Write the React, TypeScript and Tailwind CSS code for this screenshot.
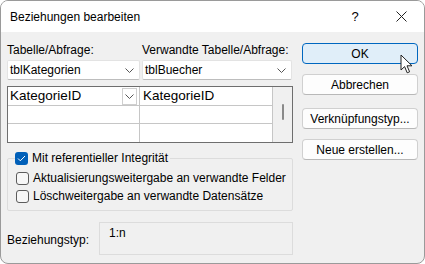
import React from 'react';

const font = { fontFamily: '"Liberation Sans", Arial, sans-serif' };

function Chevron({ className = '' }: { className?: string }) {
  return (
    <svg width="9" height="5" viewBox="0 0 9 5" className={className}>
      <path d="M0.5 0.5 L4.5 4.5 L8.5 0.5" fill="none" stroke="#555" strokeWidth="1" />
    </svg>
  );
}

function Combo({ value, width }: { value: string; width: string }) {
  return (
    <div
      className={`${width} h-[20px] bg-white border border-[#e3e3e3] border-b-[#bdbdbd] rounded-[2px] flex items-center pl-[2px] pr-[5px]`}
    >
      <span className="text-[12px] leading-[16px] text-black">{value}</span>
      <Chevron className="ml-auto" />
    </div>
  );
}

function CheckBox({ checked }: { checked?: boolean }) {
  if (checked) {
    return (
      <span className="w-[13px] h-[13px] rounded-[3px] bg-[#005fb8] flex items-center justify-center shrink-0">
        <svg width="9" height="7" viewBox="0 0 9 7">
          <path d="M1 3.5 L3.3 5.8 L8 1" fill="none" stroke="white" strokeWidth="1" />
        </svg>
      </span>
    );
  }
  return <span className="w-[13px] h-[13px] rounded-[3px] border border-[#5c5c5c] bg-[#f7f7f7] shrink-0" />;
}

function Button({ label, primary, className = '' }: { label: string; primary?: boolean; className?: string }) {
  return (
    <div
      className={`h-[21px] w-full rounded-[4px] flex items-center justify-center text-[12px] text-black ${
        primary ? 'bg-[#e0eef9] border border-[#0067c0]' : 'bg-[#fdfdfd] border border-[#d0d0d0] border-b-[#b8b8b8]'
      } ${className}`}
    >
      {label}
    </div>
  );
}

export default function App() {
  return (
    <div
      className="relative w-[425px] h-[264px] bg-[#f0f0f0] border border-[#9a9a9a] rounded-[8px] overflow-hidden flex flex-col text-black"
      style={font}
    >
      {/* title bar */}
      <div className="h-[31px] bg-white flex items-center shrink-0">
        <span className="pl-[9px] text-[12px]">Beziehungen bearbeiten</span>
        <div className="ml-auto flex h-full">
          <div className="w-[46px] h-full flex items-center justify-center text-[13px]">?</div>
          <div className="w-[46px] h-full flex items-center justify-center">
            <svg width="11" height="11" viewBox="0 0 11 11">
              <path d="M0.5 0.5 L10.5 10.5 M10.5 0.5 L0.5 10.5" stroke="#222" strokeWidth="1" />
            </svg>
          </div>
        </div>
      </div>

      <div className="flex flex-1">
        {/* left column */}
        <div className="w-[292px] pl-[6px] flex flex-col">
          <div className="mt-[10px] h-[16px] flex text-[12px] leading-[16px]">
            <span className="w-[135px]">Tabelle/Abfrage:</span>
            <span>Verwandte Tabelle/Abfrage:</span>
          </div>
          <div className="mt-[2px] flex">
            <Combo value="tblKategorien" width="w-[133px]" />
            <div className="w-[2px]" />
            <Combo value="tblBuecher" width="w-[150px]" />
          </div>

          {/* field grid */}
          <div className="mt-[6px] w-[286px] h-[57px] border border-[#6e6e6e] bg-white flex">
            <div className="w-[132px] flex flex-col border-r border-[#c6c6c6]">
              <div className="h-[19px] border-b border-[#c6c6c6] flex items-center pl-[2px] pr-[2px]">
                <span className="text-[13.5px] leading-[16px]">KategorieID</span>
                <div className="ml-auto w-[15px] h-[17px] border border-[#cfcfcf] flex items-center justify-center">
                  <Chevron />
                </div>
              </div>
              <div className="h-[18px] border-b border-[#c6c6c6]" />
              <div className="flex-1" />
            </div>
            <div className="w-[133px] flex flex-col border-r border-[#c6c6c6]">
              <div className="h-[19px] border-b border-[#c6c6c6] flex items-center pl-[3px]">
                <span className="text-[13.5px] leading-[16px]">KategorieID</span>
              </div>
              <div className="h-[18px] border-b border-[#c6c6c6]" />
              <div className="flex-1" />
            </div>
            <div className="flex-1 bg-[#f0f0f0] flex justify-center pt-[17px]">
              <div className="w-[2px] h-[16px] bg-[#8a8a8a] rounded-full" />
            </div>
          </div>

          {/* referential integrity */}
          <fieldset className="mt-[7px] w-[286px] border border-[#dcdcdc] rounded-[2px] pb-[5px]">
            <legend className="ml-[7px] pr-[2px] h-[16px] flex items-center gap-[4px] text-[12px] leading-[16px]">
              <CheckBox checked />
              <span>Mit referentieller Integrität</span>
            </legend>
            <div className="pt-[3px] pl-[8px] flex flex-col text-[12px] leading-[16px]">
              <div className="h-[18px] flex items-center gap-[4px]">
                <CheckBox />
                <span>Aktualisierungsweitergabe an verwandte Felder</span>
              </div>
              <div className="h-[18px] flex items-center gap-[4px]">
                <CheckBox />
                <span>Löschweitergabe an verwandte Datensätze</span>
              </div>
            </div>
          </fieldset>

          {/* relation type */}
          <div className="mt-[11px] flex items-center text-[12px] leading-[16px]">
            <span className="w-[92px] pt-[3px]">Beziehungstyp:</span>
            <div className="w-[194px] h-[33px] border border-[#dcdcdc] pl-[9px] pt-[2px]">1:n</div>
          </div>
        </div>

        {/* buttons */}
        <div className="ml-[9px] w-[116px] flex flex-col">
          <Button label="OK" primary className="mt-[11px]" />
          <Button label="Abbrechen" className="mt-[10px]" />
          <Button label="Verknüpfungstyp..." className="mt-[13px]" />
          <Button label="Neue erstellen..." className="mt-[10px]" />
        </div>
      </div>

      {/* mouse cursor */}
      <svg className="absolute left-[399px] top-[53px]" width="14" height="21" viewBox="0 0 14 21">
        <path
          d="M1 1 L1 16 L4.6 12.6 L7.2 18.8 L9.6 17.8 L7 11.8 L12 11.8 Z"
          fill="white"
          stroke="#222"
          strokeWidth="1"
          strokeLinejoin="round"
        />
      </svg>
    </div>
  );
}
